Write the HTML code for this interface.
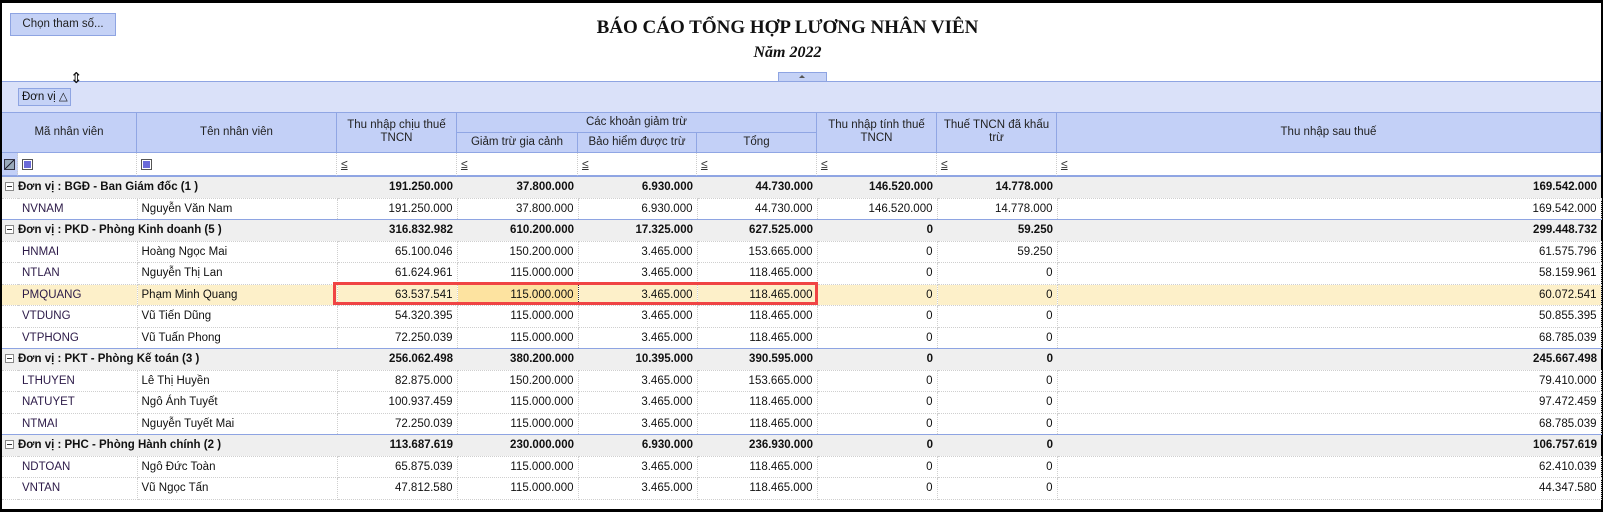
<!DOCTYPE html>
<html><head><meta charset="utf-8">
<style>
*{margin:0;padding:0;box-sizing:border-box}
body{width:1603px;height:512px;background:#000;position:relative;overflow:hidden;font-family:"Liberation Sans",Tahoma,sans-serif;font-size:11.5px;color:#111}
.a{position:absolute}
#page{left:2px;top:3px;width:1599px;height:506px;background:#fff}
.btn{left:10px;top:13px;width:106px;height:23px;background:#c5d2f6;border:1px solid #8ea4e2;text-align:center;line-height:21px;font-size:11.5px;color:#222}
.title{left:0;width:1575px;text-align:center;font-family:"Liberation Serif",serif;font-weight:bold}
.tab{left:778px;top:72px;width:49px;height:9px;background:#c5d2f6;border:1px solid #8ea4e2;border-bottom:none}
.tab:after{content:"";position:absolute;left:20px;top:2px;border-left:3px solid transparent;border-right:3px solid transparent;border-bottom:3px solid #555}
.gp{left:2px;top:81px;width:1599px;height:31px;background:#dae1f9;border-top:1px solid #8ea4e2}
.gbtn{left:18px;top:88px;width:53px;height:18px;background:#c5d2f6;border:1px solid #8ea4e2;line-height:16px;padding-left:3px;font-size:11.5px}
.h{background:#c3d0f7;border-right:1px solid #90a6e4;border-bottom:1px solid #90a6e4;text-align:center;font-size:11.5px;color:#222;line-height:13px;display:flex;align-items:center;justify-content:center}
.hb{border-top:1px solid #90a6e4}
.f{top:153px;height:23px;background:#fff;border-right:1px dotted #ccc;border-bottom:1px solid #90a6e4}
.le{position:absolute;left:4px;top:4px;text-decoration:underline;font-size:12px;color:#333}
.sq{position:absolute;left:4px;top:6px;width:11px;height:11px;border:1px solid #555;background:#fff}
.sq:after{content:"";position:absolute;left:1px;top:1px;width:7px;height:7px;background:#6a6ad8}
table{position:absolute;left:2px;top:176px;border-collapse:collapse;table-layout:fixed;width:1599px}
td{height:21.5px;padding:0 4px;border-right:1px dotted #cfcfcf;border-bottom:1px dotted #cfcfcf;white-space:nowrap;overflow:hidden;text-align:right;font-size:11.5px}
td.l{text-align:left}
td.m{color:#2c1a48}
tr.g td{background:#efefef;font-weight:bold;border-top:1px solid #8ea4e2;border-right:none}
tr.g td.gl{padding-left:3px;text-align:left}
.ex{display:inline-block;width:9px;height:9px;border:1px solid #888;background:#fff;position:relative;vertical-align:-1px;margin-right:4px}
.ex:after{content:"";position:absolute;left:1px;top:3px;width:5px;height:1px;background:#333}
tr.s td{background:#fdf0c9}
tr.s td.fc{background:#fde3a0;border-left:1px dotted #333;border-right:1px dotted #333}
td.gu{border-right:none}
.red{left:333px;top:282px;width:485px;height:23px;border:3px solid #f04444}
</style></head><body>
<div class="a" id="page"></div>
<div class="a btn">Chọn tham số...</div>
<div class="a title" style="top:17px;font-size:19px">BÁO CÁO TỔNG HỢP LƯƠNG NHÂN VIÊN</div>
<div class="a title" style="top:44px;font-size:16px;font-style:italic">Năm 2022</div>
<div class="a tab"></div>
<div class="a gp"></div>
<div class="a gbtn">Đơn vị &#9651;</div>
<div class="a" style="left:70px;top:71px;font-size:15px;line-height:15px">&#8661;</div>

<div class="a h hb" style="left:2px;top:112px;width:135px;height:41px">Mã nhân viên</div>
<div class="a h hb" style="left:137px;top:112px;width:200px;height:41px">Tên nhân viên</div>
<div class="a h hb" style="left:337px;top:112px;width:120px;height:41px;align-items:flex-start;padding-top:6px">Thu nhập chịu thuế<br>TNCN</div>
<div class="a h hb" style="left:457px;top:112px;width:360px;height:21px">Các khoản giảm trừ</div>
<div class="a h" style="left:457px;top:133px;width:121px;height:20px">Giảm trừ gia cảnh</div>
<div class="a h" style="left:578px;top:133px;width:119px;height:20px">Bảo hiểm được trừ</div>
<div class="a h" style="left:697px;top:133px;width:120px;height:20px">Tổng</div>
<div class="a h hb" style="left:817px;top:112px;width:120px;height:41px;align-items:flex-start;padding-top:6px">Thu nhập tính thuế<br>TNCN</div>
<div class="a h hb" style="left:937px;top:112px;width:120px;height:41px;align-items:flex-start;padding-top:6px">Thuế TNCN đã khấu<br>trừ</div>
<div class="a h hb" style="left:1057px;top:112px;width:544px;height:41px">Thu nhập sau thuế</div>

<div class="a f" style="left:2px;width:16px;background:#c3d0f7"><div class="a" style="left:2px;top:6px;width:11px;height:11px;border:1px solid #334;background:linear-gradient(135deg,#9ab 0 45%,#223 45% 55%,#9ab 55%)"></div></div>
<div class="a f" style="left:18px;width:119px"><div class="sq"></div></div>
<div class="a f" style="left:137px;width:200px"><div class="sq"></div></div>
<div class="a f" style="left:337px;width:120px"><span class="le">≤</span></div>
<div class="a f" style="left:457px;width:121px"><span class="le">≤</span></div>
<div class="a f" style="left:578px;width:119px"><span class="le">≤</span></div>
<div class="a f" style="left:697px;width:120px"><span class="le">≤</span></div>
<div class="a f" style="left:817px;width:120px"><span class="le">≤</span></div>
<div class="a f" style="left:937px;width:120px"><span class="le">≤</span></div>
<div class="a f" style="left:1057px;width:544px;border-right:none"><span class="le">≤</span></div>

<table>
<colgroup><col style="width:16px"><col style="width:119px"><col style="width:200px"><col style="width:120px"><col style="width:121px"><col style="width:119px"><col style="width:120px"><col style="width:120px"><col style="width:120px"><col style="width:544px"></colgroup>
<tr class="g"><td class="gl" colspan="3"><span class="ex"></span>Đơn vị : BGĐ - Ban Giám đốc (1 )</td><td>191.250.000</td><td>37.800.000</td><td>6.930.000</td><td>44.730.000</td><td>146.520.000</td><td>14.778.000</td><td>169.542.000</td></tr>
<tr><td class="gu"></td><td class="l m">NVNAM</td><td class="l">Nguyễn Văn Nam</td><td>191.250.000</td><td>37.800.000</td><td>6.930.000</td><td>44.730.000</td><td>146.520.000</td><td>14.778.000</td><td>169.542.000</td></tr>
<tr class="g"><td class="gl" colspan="3"><span class="ex"></span>Đơn vị : PKD - Phòng Kinh doanh (5 )</td><td>316.832.982</td><td>610.200.000</td><td>17.325.000</td><td>627.525.000</td><td>0</td><td>59.250</td><td>299.448.732</td></tr>
<tr><td class="gu"></td><td class="l m">HNMAI</td><td class="l">Hoàng Ngọc Mai</td><td>65.100.046</td><td>150.200.000</td><td>3.465.000</td><td>153.665.000</td><td>0</td><td>59.250</td><td>61.575.796</td></tr>
<tr><td class="gu"></td><td class="l m">NTLAN</td><td class="l">Nguyễn Thị Lan</td><td>61.624.961</td><td>115.000.000</td><td>3.465.000</td><td>118.465.000</td><td>0</td><td>0</td><td>58.159.961</td></tr>
<tr class="s"><td class="gu"></td><td class="l m">PMQUANG</td><td class="l">Phạm Minh Quang</td><td>63.537.541</td><td class="fc">115.000.000</td><td>3.465.000</td><td>118.465.000</td><td>0</td><td>0</td><td>60.072.541</td></tr>
<tr><td class="gu"></td><td class="l m">VTDUNG</td><td class="l">Vũ Tiến Dũng</td><td>54.320.395</td><td>115.000.000</td><td>3.465.000</td><td>118.465.000</td><td>0</td><td>0</td><td>50.855.395</td></tr>
<tr><td class="gu"></td><td class="l m">VTPHONG</td><td class="l">Vũ Tuấn Phong</td><td>72.250.039</td><td>115.000.000</td><td>3.465.000</td><td>118.465.000</td><td>0</td><td>0</td><td>68.785.039</td></tr>
<tr class="g"><td class="gl" colspan="3"><span class="ex"></span>Đơn vị : PKT - Phòng Kế toán (3 )</td><td>256.062.498</td><td>380.200.000</td><td>10.395.000</td><td>390.595.000</td><td>0</td><td>0</td><td>245.667.498</td></tr>
<tr><td class="gu"></td><td class="l m">LTHUYEN</td><td class="l">Lê Thị Huyền</td><td>82.875.000</td><td>150.200.000</td><td>3.465.000</td><td>153.665.000</td><td>0</td><td>0</td><td>79.410.000</td></tr>
<tr><td class="gu"></td><td class="l m">NATUYET</td><td class="l">Ngô Ánh Tuyết</td><td>100.937.459</td><td>115.000.000</td><td>3.465.000</td><td>118.465.000</td><td>0</td><td>0</td><td>97.472.459</td></tr>
<tr><td class="gu"></td><td class="l m">NTMAI</td><td class="l">Nguyễn Tuyết Mai</td><td>72.250.039</td><td>115.000.000</td><td>3.465.000</td><td>118.465.000</td><td>0</td><td>0</td><td>68.785.039</td></tr>
<tr class="g"><td class="gl" colspan="3"><span class="ex"></span>Đơn vị : PHC - Phòng Hành chính (2 )</td><td>113.687.619</td><td>230.000.000</td><td>6.930.000</td><td>236.930.000</td><td>0</td><td>0</td><td>106.757.619</td></tr>
<tr><td class="gu"></td><td class="l m">NDTOAN</td><td class="l">Ngô Đức Toàn</td><td>65.875.039</td><td>115.000.000</td><td>3.465.000</td><td>118.465.000</td><td>0</td><td>0</td><td>62.410.039</td></tr>
<tr><td class="gu"></td><td class="l m">VNTAN</td><td class="l">Vũ Ngọc Tấn</td><td>47.812.580</td><td>115.000.000</td><td>3.465.000</td><td>118.465.000</td><td>0</td><td>0</td><td>44.347.580</td></tr>
</table>
<div class="a red"></div>
</body></html>
